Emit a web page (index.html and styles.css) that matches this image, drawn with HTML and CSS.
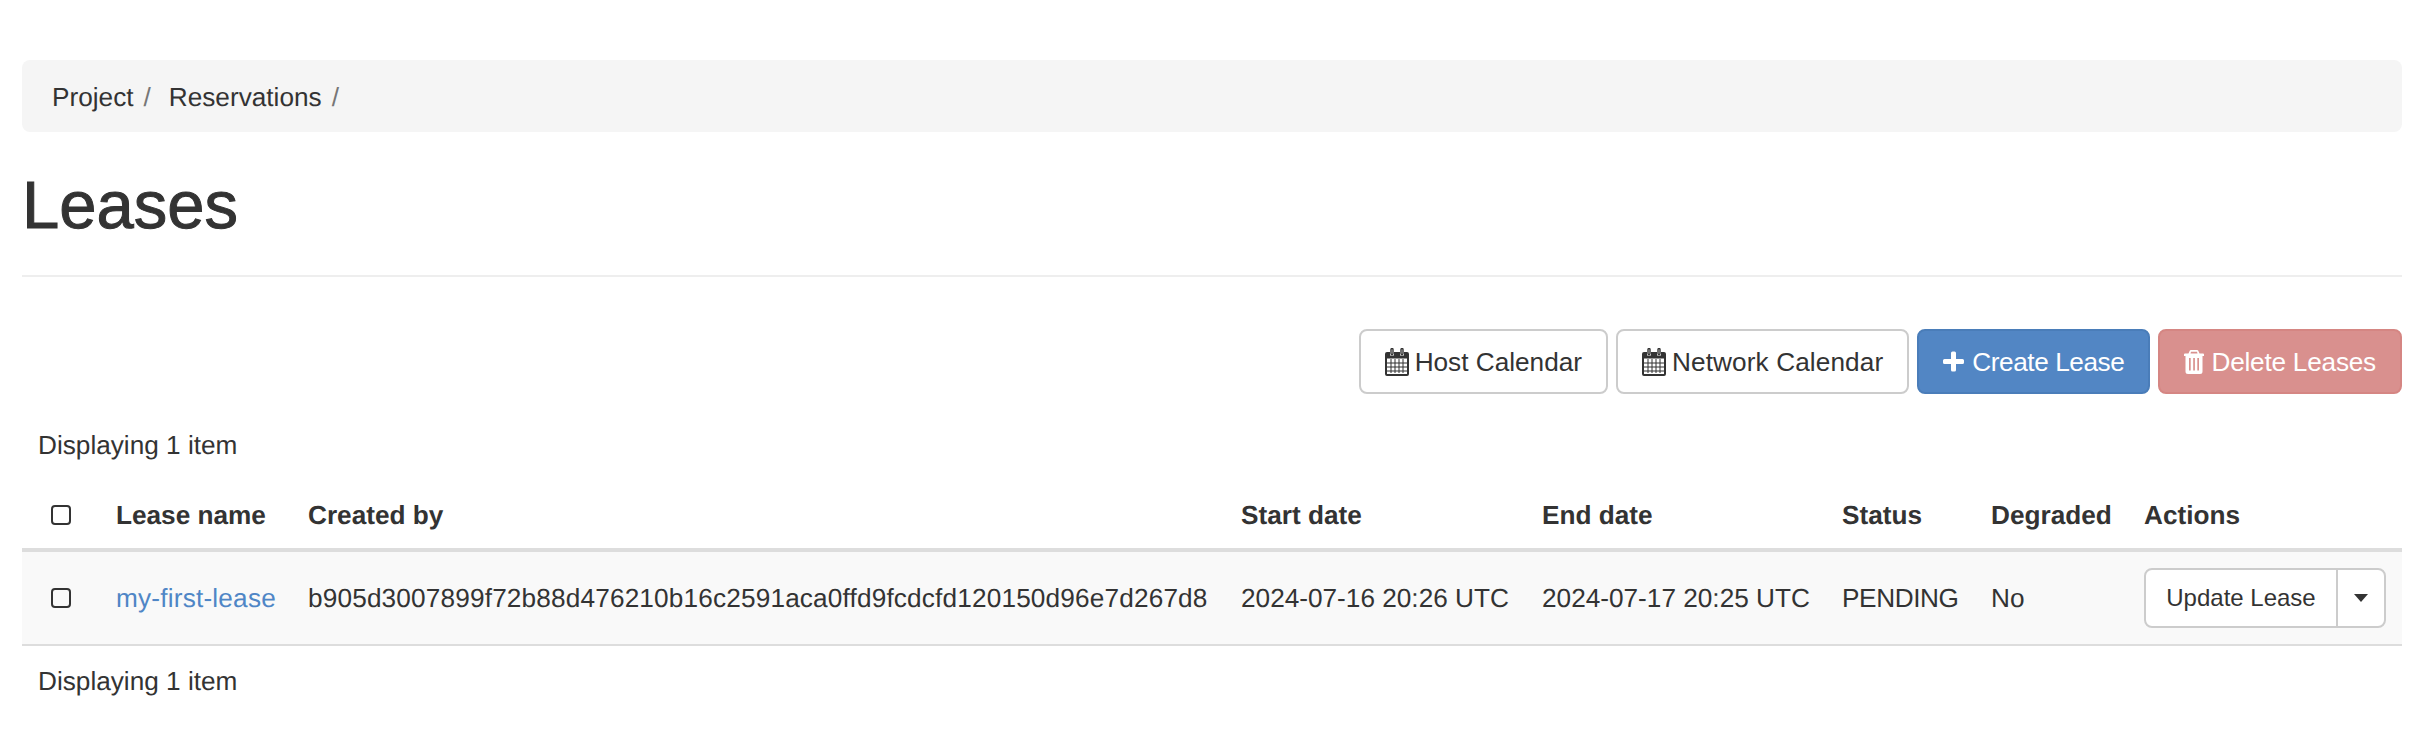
FILE: index.html
```html
<!DOCTYPE html>
<html lang="en">
<head>
<meta charset="utf-8">
<title>Leases</title>
<link rel="stylesheet" href="styles.css">
</head>
<body>
<ol class="breadcrumb">
  <li>Project</li>
  <li>Reservations</li>
</ol>
<div class="page-header"><h1>Leases</h1></div>
<div class="toolbar">
  <button class="btn">
    <svg class="icon icon-cal" viewBox="0 0 24 28"><path fill-rule="evenodd" d="M2 4h3v3.500h4V4h6v3.500h4V4h3a2 2 0 0 1 2 2v20a2 2 0 0 1-2 2H2a2 2 0 0 1-2-2V6a2 2 0 0 1 2-2zM2 10.500V26h20V10.500z"/><path d="M6 1.500a1 1 0 0 1 2 0v4a1 1 0 0 1-2 0zM16 1.500a1 1 0 0 1 2 0v4a1 1 0 0 1-2 0z" fill="none" stroke="currentColor" stroke-width="1.400"/><path d="M2 15h20M2 19h20M2 23h20M6 11v14M10 11v14M14 11v14M18 11v14" stroke="currentColor" stroke-width="1" fill="none"/></svg>
    Host Calendar
  </button>
  <button class="btn btn-network">
    <svg class="icon icon-cal" viewBox="0 0 24 28"><path fill-rule="evenodd" d="M2 4h3v3.500h4V4h6v3.500h4V4h3a2 2 0 0 1 2 2v20a2 2 0 0 1-2 2H2a2 2 0 0 1-2-2V6a2 2 0 0 1 2-2zM2 10.500V26h20V10.500z"/><path d="M6 1.500a1 1 0 0 1 2 0v4a1 1 0 0 1-2 0zM16 1.500a1 1 0 0 1 2 0v4a1 1 0 0 1-2 0z" fill="none" stroke="currentColor" stroke-width="1.400"/><path d="M2 15h20M2 19h20M2 23h20M6 11v14M10 11v14M14 11v14M18 11v14" stroke="currentColor" stroke-width="1" fill="none"/></svg>
    Network Calendar
  </button>
  <button class="btn btn-primary">
    <svg class="icon icon-plus" viewBox="0 0 21 21"><path d="M8 2a1.500 1.500 0 0 1 1.500-1.500h2A1.500 1.500 0 0 1 13 2v6h6.500A1.500 1.500 0 0 1 21 9.500v2a1.500 1.500 0 0 1-1.500 1.500H13v6a1.500 1.500 0 0 1-1.500 1.500h-2A1.500 1.500 0 0 1 8 19v-6H1.500A1.500 1.500 0 0 1 0 11.500v-2A1.500 1.500 0 0 1 1.500 8H8z"/></svg>
    Create Lease
  </button>
  <button class="btn btn-danger">
    <svg class="icon icon-trash" viewBox="0 0 20 24"><path fill-rule="evenodd" d="M7 0h6a1.500 1.500 0 0 1 1.400 1L15.500 3.500H19a1 1 0 0 1 1 1V6H18.500v15.500A2.500 2.500 0 0 1 16 24H4a2.500 2.500 0 0 1-2.500-2.500V6H0V4.500a1 1 0 0 1 1-1h3.500L5.600 1A1.500 1.500 0 0 1 7 0zM7 1.800 6.500 3.500h7L13 1.800zM5 8v12.500h1.700V8zM9.200 8v12.500h1.700V8zM13.300 8v12.500H15V8z"/></svg>
    Delete Leases
  </button>
</div>
<div class="summary">Displaying 1 item</div>
<table class="table">
  <colgroup>
    <col class="col-check"><col class="col-name"><col class="col-owner"><col class="col-start"><col class="col-end"><col class="col-status"><col class="col-degraded"><col class="col-actions">
  </colgroup>
  <thead>
    <tr>
      <th class="cell-check"><input type="checkbox" class="check" aria-label="Select all"></th>
      <th>Lease name</th>
      <th>Created by</th>
      <th>Start date</th>
      <th>End date</th>
      <th>Status</th>
      <th>Degraded</th>
      <th>Actions</th>
    </tr>
  </thead>
  <tbody>
    <tr>
      <td class="cell-check"><input type="checkbox" class="check" aria-label="Select my-first-lease"></td>
      <td><a href="#">my-first-lease</a></td>
      <td class="cell-hash">b905d3007899f72b88d476210b16c2591aca0ffd9fcdcfd120150d96e7d267d8</td>
      <td>2024-07-16 20:26 UTC</td>
      <td>2024-07-17 20:25 UTC</td>
      <td class="cell-status">PENDING</td>
      <td>No</td>
      <td>
        <div class="btn-split">
          <button class="split-main">Update Lease</button>
          <button class="split-toggle" aria-label="More actions"><span class="caret"></span></button>
        </div>
      </td>
    </tr>
  </tbody>
</table>
<div class="summary summary-bottom">Displaying 1 item</div>
</body>
</html>
```

FILE: styles.css
```css
* { box-sizing: border-box; }

body {
  margin: 0;
  padding: 60px 24px 0 22px;
  font-family: "Liberation Sans", Arial, sans-serif;
  font-size: 26.2px;
  line-height: 40px;
  color: #333;
  background: #fff;
  text-rendering: geometricPrecision;
}

.breadcrumb {
  display: flex;
  align-items: center;
  height: 72px;
  margin: 0;
  padding: 2px 0 0 30px;
  list-style: none;
  background: #f5f5f5;
  border-radius: 8px;
}

.breadcrumb li::after {
  content: "/";
  margin: 0 18px 0 10px;
  color: #777;
}

.page-header {
  height: 145px;
  border-bottom: 2px solid #eee;
}

.page-header h1 {
  margin: 0;
  padding-top: 38px;
  font-size: 67px;
  font-weight: 500;
  line-height: 72px;
  -webkit-text-stroke: 1px #333;
}

.toolbar {
  display: flex;
  justify-content: flex-end;
  gap: 8px;
  margin-top: 52px;
}

.btn {
  display: flex;
  align-items: center;
  height: 65px;
  padding: 0 24px;
  font: inherit;
  color: #333;
  white-space: nowrap;
  background: #fff;
  border: 2px solid #ccc;
  border-radius: 8px;
}

.btn-network {
  letter-spacing: 0.1px;
}

.btn-primary {
  color: #fff;
  letter-spacing: -0.42px;
  background: #5286c4;
  border-color: #4a7db9;
}

.btn-danger {
  color: #fff;
  letter-spacing: -0.22px;
  background: #d9908e;
  border-color: #d58683;
}

.icon {
  flex: none;
  fill: currentColor;
}

.icon-cal { width: 24px; height: 28px; margin-right: 6px; }
.icon-plus { width: 21px; height: 21px; margin-right: 8px; }
.icon-trash { width: 20px; height: 24px; margin-right: 7px; }

.summary {
  margin-top: 31px;
  padding-left: 16px;
}

.summary-bottom {
  margin-top: 15px;
}

.table {
  width: 100%;
  margin-top: 16px;
  table-layout: fixed;
  border-collapse: collapse;
}

.col-check { width: 78px; }
.col-name { width: 192px; }
.col-owner { width: 933px; }
.col-start { width: 301px; }
.col-end { width: 300px; }
.col-status { width: 149px; }
.col-degraded { width: 153px; }
.col-actions { width: 274px; }

.table th {
  height: 69px;
  padding: 0 16px;
  text-align: left;
  white-space: nowrap;
  border-bottom: 4px solid #ddd;
}

.table td {
  height: 95px;
  padding: 0 16px;
  white-space: nowrap;
  background: #f9f9f9;
  border-bottom: 2px solid #ddd;
}

.table .cell-hash {
  letter-spacing: 0.16px;
}

.table .cell-status {
  letter-spacing: -0.4px;
}

.table .cell-check {
  padding: 0;
  text-align: center;
}

.check {
  display: block;
  width: 20px;
  height: 20px;
  margin: 0 auto;
  appearance: none;
  background: #fff;
  border: 2px solid #333;
  border-radius: 4px;
}

.table td .check {
  background: transparent;
}

a {
  color: #4f86c6;
  letter-spacing: 0.2px;
  text-decoration: none;
}

.btn-split {
  display: flex;
  width: 242px;
  height: 60px;
}

.split-main,
.split-toggle {
  font-family: inherit;
  font-size: 24px;
  color: #333;
  background: #fff;
  border: 2px solid #ccc;
}

.split-main {
  flex: 1;
  padding: 0;
  border-radius: 8px 0 0 8px;
}

.split-toggle {
  display: flex;
  align-items: center;
  justify-content: center;
  width: 50px;
  margin-left: -2px;
  padding: 0;
  border-radius: 0 8px 8px 0;
}

.caret {
  width: 0;
  height: 0;
  border-top: 8px solid #333;
  border-right: 7px solid transparent;
  border-left: 7px solid transparent;
}
```
